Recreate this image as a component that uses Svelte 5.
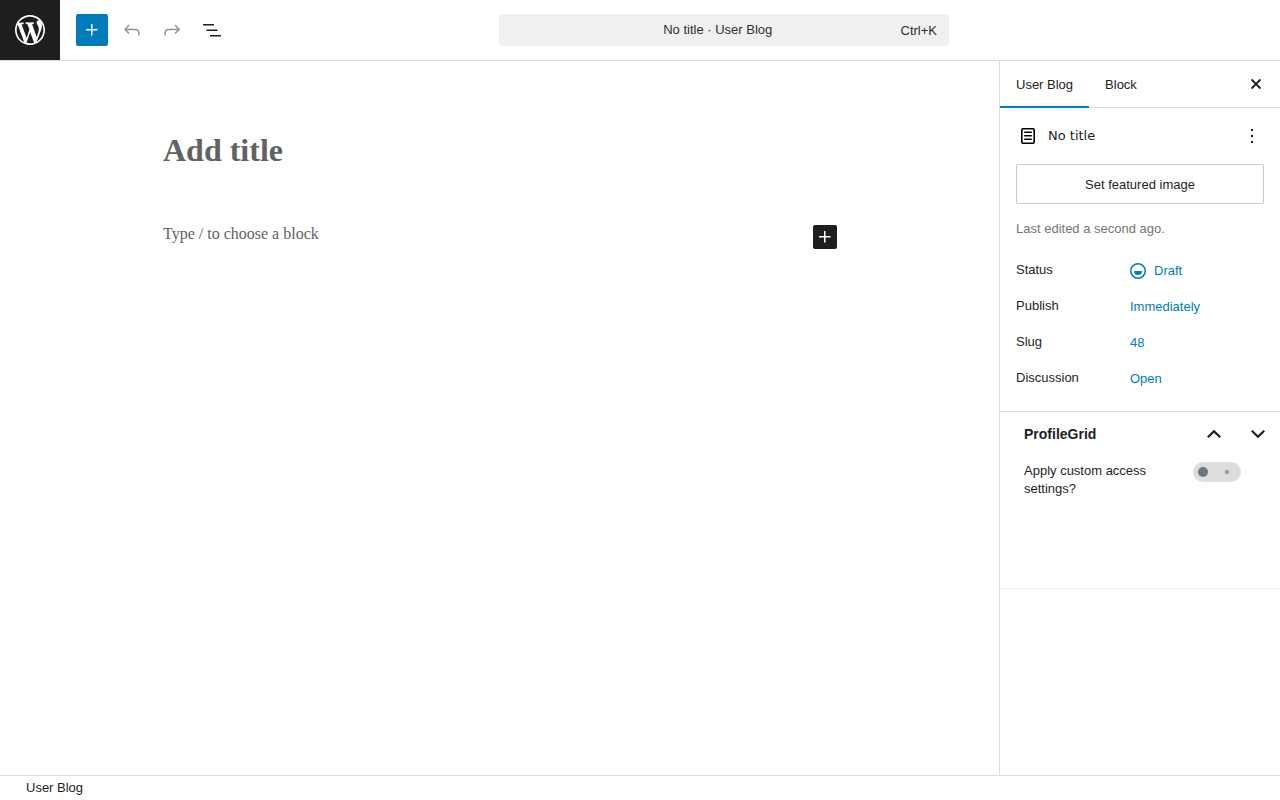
<script>
  let title = $state("");
  let content = $state("");
  let activeTab = $state("User Blog");
  let customAccess = $state(false);

  const tabs = ["User Blog", "Block"];
  const rows = [
    { label: "Status", value: "Draft", icon: true },
    { label: "Publish", value: "Immediately" },
    { label: "Slug", value: "48" },
    { label: "Discussion", value: "Open" },
  ];
  const plus = "M11 12.5V17.5H12.5V12.5H17.5V11H12.5V6H11V11H6V12.5H11Z";
</script>

{#snippet icon(d)}
  <svg class="icon" viewBox="0 0 24 24" aria-hidden="true">
    <path fill-rule="evenodd" {d} />
  </svg>
{/snippet}

<div class="editor">
  <header>
    <a class="logo" href="#posts" aria-label="View Posts">
      <svg viewBox="-2 -2 24 24" aria-hidden="true">
        <path
          d="M20 10c0-5.51-4.49-10-10-10C4.48 0 0 4.49 0 10c0 5.52 4.48 10 10 10 5.51 0 10-4.48 10-10zM7.78 15.37L4.37 6.22c.55-.02 1.17-.08 1.17-.08.5-.06.44-1.13-.06-1.11 0 0-1.45.11-2.37.11-.18 0-.37 0-.58-.01C4.12 2.69 6.87 1.11 10 1.11c2.33 0 4.45.87 6.05 2.34-.68-.11-1.65.39-1.65 1.58 0 .74.45 1.36.9 2.1.35.61.55 1.36.55 2.46 0 1.49-1.4 5-1.4 5l-3.03-8.37c.54-.02.82-.17.82-.17.5-.05.44-1.25-.06-1.22 0 0-1.44.12-2.38.12-.87 0-2.33-.12-2.33-.12-.5-.03-.56 1.2-.06 1.22l.92.08 1.26 3.41zM17.41 10c.24-.64.74-1.87.43-4.25.7 1.29 1.05 2.71 1.05 4.25 0 3.29-1.73 6.24-4.4 7.78.97-2.59 1.94-5.2 2.92-7.78zM6.1 18.09C3.12 16.65 1.11 13.53 1.11 10c0-1.3.23-2.48.72-3.59C3.25 10.3 4.67 14.2 6.1 18.09zm4.03-6.63l2.58 6.98c-.86.29-1.76.45-2.71.45-.79 0-1.57-.11-2.29-.33.81-2.38 1.62-4.74 2.42-7.1z"
        />
      </svg>
    </a>
    <div class="toolbar">
      <button class="primary" aria-label="Toggle block inserter">
        {@render icon(plus)}
      </button>
      <button aria-label="Undo" disabled>
        {@render icon(
          "M18.3 11.7c-.6-.6-1.4-.9-2.3-.9H6.7l2.9-3.3-1.1-1-4.5 5L8.5 16l1-1-2.7-2.7H16c.5 0 .9.2 1.3.5 1 1 1 3.4 1 4.5v.3h1.5v-.2c0-1.5 0-4.3-1.5-5.7z",
        )}
      </button>
      <button aria-label="Redo" disabled>
        {@render icon(
          "M15.6 6.5l-1.1 1 2.9 3.3H8c-.9 0-1.7.3-2.3.9-1.4 1.5-1.4 4.2-1.4 5.6v.2h1.5v-.3c0-1.1 0-3.5 1-4.5.3-.3.7-.5 1.3-.5h9.2L14.5 15l1.1 1.1 4.6-4.6-4.6-5z",
        )}
      </button>
      <button aria-label="Document Overview">
        {@render icon(
          "M3 6h11v1.5H3V6Zm3.5 5.5h11V13h-11v-1.5ZM21 17H10v1.5h11V17Z",
        )}
      </button>
    </div>
    <div class="center">
      <button class="command">
        <span class="name">No title · User Blog</span>
        <span class="shortcut">Ctrl+K</span>
      </button>
    </div>
  </header>

  <div class="body">
    <main>
      <div class="canvas">
        <input
          class="title"
          aria-label="Add title"
          placeholder="Add title"
          bind:value={title}
        />
        <div class="block">
          <input
            aria-label="Add default block"
            placeholder="Type / to choose a block"
            bind:value={content}
          />
          <button aria-label="Add block">{@render icon(plus)}</button>
        </div>
      </div>
    </main>

    <aside>
      <div class="tabs">
        {#each tabs as tab}
          <button
            class="tab"
            class:active={activeTab === tab}
            onclick={() => (activeTab = tab)}>{tab}</button
          >
        {/each}
        <button class="close" aria-label="Close Settings">
          <svg class="cross" viewBox="0 0 24 24" aria-hidden="true">
            <path d="M7.500 7.500l9 9M16.500 7.500l-9 9" />
          </svg>
        </button>
      </div>

      <section class="summary">
        <div class="card">
          <svg class="page" viewBox="0 0 24 24" aria-hidden="true">
            <rect x="5.800" y="4.800" width="12.400" height="14.400" rx="1.200" />
            <path d="M8.200 8.250h7.600M8.200 11.750h7.600M8.200 15.250h7.600" />
          </svg>
          <h2>No title</h2>
          <button aria-label="Actions">
            {@render icon(
              "M13 19h-2v-2h2v2zm0-6h-2v-2h2v2zm0-6h-2V5h2v2z",
            )}
          </button>
        </div>
        <button class="featured">Set featured image</button>
        <p>Last edited a second ago.</p>
        <div class="rows">
          {#each rows as row}
            <div class="row">
              <span class="label">{row.label}</span>
              <button aria-label="{row.label}: {row.value}">
                {#if row.icon}
                  {@render icon(
                    "M12 18.5a6.5 6.5 0 1 1 0-13 6.5 6.5 0 0 1 0 13ZM4 12a8 8 0 1 1 16 0 8 8 0 0 1-16 0Zm8 4a4 4 0 0 0 4-4H8a4 4 0 0 0 4 4Z",
                  )}
                {/if}
                {row.value}
              </button>
            </div>
          {/each}
        </div>
      </section>

      <section class="metabox">
        <div class="metabox-header">
          <h2>ProfileGrid</h2>
          <button aria-label="Move up">
            <svg class="chevron" viewBox="0 0 24 24" aria-hidden="true">
              <path d="M5.800 15.200L12 9.200l6.200 6" />
            </svg>
          </button>
          <button aria-label="Move down">
            <svg class="chevron" viewBox="0 0 24 24" aria-hidden="true">
              <path d="M5.800 8.800L12 14.800l6.200-6" />
            </svg>
          </button>
        </div>
        <div class="setting">
          <label for="custom-access">Apply custom access settings?</label>
          <input
            id="custom-access"
            type="checkbox"
            bind:checked={customAccess}
          />
        </div>
      </section>
    </aside>
  </div>

  <footer>User Blog</footer>
</div>

<style>
  :global(body) {
    margin: 0;
    background: #fff;
  }
  .editor {
    display: flex;
    flex-direction: column;
    min-height: 100vh;
    color: #1e1e1e;
    font-family: "Liberation Sans", Arial, sans-serif;
    font-size: 13px;
    line-height: 18px;
  }
  .editor *,
  .editor *::before,
  .editor *::after {
    box-sizing: border-box;
  }
  button {
    display: flex;
    align-items: center;
    justify-content: center;
    padding: 0;
    border: 0;
    border-radius: 2px;
    background: none;
    color: inherit;
    font: inherit;
    cursor: pointer;
  }
  .icon {
    flex: none;
    width: 24px;
    height: 24px;
    fill: currentColor;
  }

  header {
    display: flex;
    align-items: center;
    border-bottom: 1px solid #ddd;
  }
  .logo {
    display: flex;
    align-items: center;
    justify-content: center;
    width: 60px;
    height: 60px;
    background: #1e1e1e;
  }
  .logo svg {
    width: 36px;
    height: 36px;
    fill: #fff;
  }
  .toolbar {
    display: flex;
    gap: 8px;
    padding-left: 16px;
  }
  .toolbar button {
    width: 32px;
    height: 32px;
  }
  .toolbar button:disabled {
    color: #949494;
  }
  .toolbar .primary {
    background: #007cba;
    color: #fff;
  }
  .center {
    display: flex;
    flex: 1;
    justify-content: center;
    padding-right: 60px;
  }
  .command {
    width: 450px;
    height: 32px;
    padding: 0 12px;
    border-radius: 4px;
    background: #f0f0f0;
    color: #2f2f2f;
  }
  .command .name {
    flex: 1;
    padding-left: 24px;
    text-align: center;
  }
  .command .shortcut {
    line-height: 15px;
  }

  .body {
    display: flex;
    flex: 1;
  }
  main {
    flex: 1;
    min-width: 0;
  }
  .canvas {
    max-width: 674px;
    margin: 0 auto;
    padding-top: 67px;
    font-family: "Liberation Serif", "Times New Roman", serif;
  }
  .canvas input {
    width: 100%;
    padding: 0;
    border: 0;
    outline: 0;
    background: none;
    color: #1e1e1e;
    font: inherit;
    font-size: 16px;
  }
  .canvas input::placeholder {
    color: #626262;
    opacity: 1;
  }
  .canvas .title {
    display: block;
    height: 44px;
    font-size: 32px;
    font-weight: bold;
  }
  .block {
    display: flex;
    align-items: flex-end;
    margin-top: 50px;
  }
  .block input {
    height: 24px;
    margin-bottom: 3px;
  }
  .block button {
    flex: none;
    width: 24px;
    height: 24px;
    background: #1e1e1e;
    color: #fff;
  }

  aside {
    flex: none;
    width: 280px;
    box-shadow: -1px 0 #ddd;
  }
  .tabs {
    display: flex;
    height: 47px;
    border-bottom: 1px solid #ddd;
  }
  .tab {
    height: 47px;
    padding: 0 16px;
    border-radius: 0;
  }
  .tab.active {
    box-shadow: inset 0 -2px #007cba;
  }
  .close {
    width: 32px;
    margin-left: auto;
    margin-right: 8px;
  }
  .cross {
    width: 24px;
    height: 24px;
    stroke: #1e1e1e;
    stroke-width: 1.8;
  }
  .summary {
    padding: 16px;
    border-bottom: 1px solid #ddd;
  }
  .card {
    display: flex;
    align-items: center;
    gap: 8px;
  }
  .page {
    width: 24px;
    height: 24px;
    fill: none;
    stroke: #000;
    stroke-width: 1.6;
  }
  .card h2 {
    flex: 1;
    margin: 0;
    font-family: "DejaVu Sans", sans-serif;
    font-size: 13px;
    font-weight: normal;
  }
  .featured {
    width: 100%;
    height: 40px;
    margin: 16px 0;
    border: 1px solid #ccc;
    line-height: 15px;
  }
  .summary p {
    margin: 0 0 17px;
    color: #757575;
  }
  .rows {
    display: flex;
    flex-direction: column;
    gap: 4px;
  }
  .row {
    display: flex;
    align-items: center;
    height: 32px;
  }
  .row .label {
    width: 114px;
    padding-bottom: 2px;
  }
  .row button {
    color: #007cba;
    gap: 4px;
  }
  .row .icon {
    margin-left: -4px;
  }

  .metabox {
    padding-bottom: 90px;
    border-bottom: 1px solid #f0f0f0;
  }
  .metabox-header {
    display: flex;
    align-items: center;
    height: 44px;
    padding-left: 24px;
  }
  .metabox-header h2 {
    flex: 1;
    margin: 0;
    font-size: 14px;
  }
  .metabox-header button {
    width: 44px;
    height: 44px;
  }
  .chevron {
    width: 24px;
    height: 24px;
    fill: none;
    stroke: #1e1e1e;
    stroke-width: 2.2;
  }
  .setting {
    display: flex;
    align-items: flex-start;
    justify-content: space-between;
    gap: 16px;
    padding: 6px 39px 0 24px;
  }
  .setting input {
    display: flex;
    flex: none;
    align-items: center;
    justify-content: space-between;
    width: 48px;
    height: 20px;
    margin: 0;
    padding: 0 12px 0 5px;
    border-radius: 10px;
    background: #ddd;
    appearance: none;
    cursor: pointer;
  }
  .setting input::before {
    content: "";
    width: 10px;
    height: 10px;
    border-radius: 50%;
    background: #6c7781;
  }
  .setting input::after {
    content: "";
    width: 4px;
    height: 4px;
    border: 1px solid #6c7781;
    border-radius: 50%;
  }
  .setting input:checked {
    flex-direction: row-reverse;
    padding: 0 5px 0 12px;
    background: #a5d3ea;
  }

  footer {
    height: 25px;
    padding: 3px 26px;
    border-top: 1px solid #ddd;
  }
</style>
